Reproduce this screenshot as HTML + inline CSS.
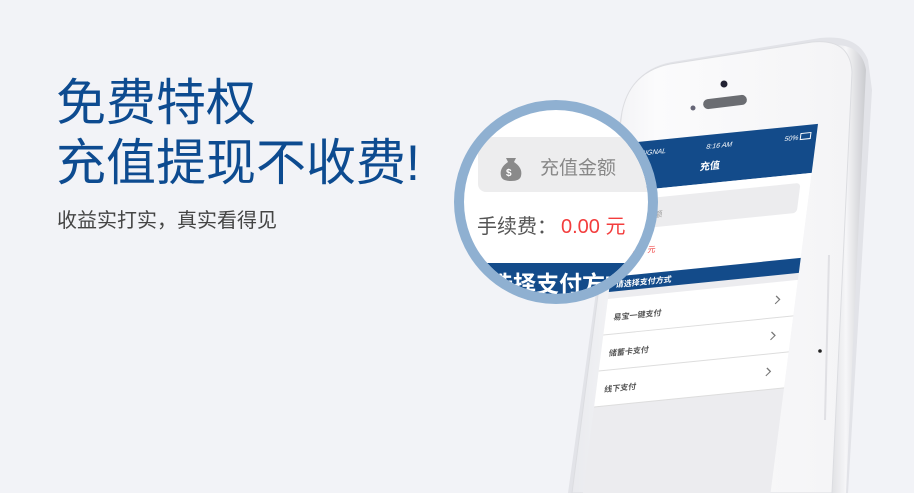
<!DOCTYPE html>
<html><head><meta charset="utf-8"><style>
html,body{margin:0;padding:0;width:914px;height:493px;overflow:hidden;background:#f2f3f7;font-family:"Liberation Sans","Noto Sans CJK SC",sans-serif}
.h{position:absolute;left:56px;color:#0d4b90;font-size:50px;line-height:58px;white-space:nowrap}
.s{position:absolute;left:57px;top:204px;color:#444;font-size:20px;white-space:nowrap}
svg{position:absolute;left:0;top:0}
</style></head><body>
<div class="h" style="top:74px">免费特权</div>
<div class="h" style="top:134px">充值提现不收费!</div>
<div class="s">收益实打实，真实看得见</div>
<svg width="914" height="493" viewBox="0 0 914 493" font-family="Liberation Sans, Noto Sans CJK SC, sans-serif">
<defs>
<linearGradient id="bd" x1="0" y1="0" x2="1" y2="0">
<stop offset="0" stop-color="#e9eaee"/><stop offset="0.3" stop-color="#fbfbfc"/><stop offset="1" stop-color="#f4f4f6"/></linearGradient>
<linearGradient id="sd" x1="0" y1="0" x2="1" y2="0">
<stop offset="0" stop-color="#d8d9dd"/><stop offset="0.5" stop-color="#f6f6f8"/><stop offset="1" stop-color="#c9cace"/></linearGradient>
<clipPath id="cc"><circle cx="556" cy="202" r="92"/></clipPath>
</defs>
<path d="M568,493 L620,120 Q628,70 672,62 L820,38 Q858,34 868,60 L872,90 L848,493 Z" fill="#e2e3e8"/>
<path d="M835,45 Q862,45 866,70 L846,493 L826,493 L848,70 Z" fill="url(#sd)"/>
<path d="M572,493 L622,112 Q630,72 670,64 L812,42 Q850,38 852,72 L832,493 Z" fill="url(#bd)" stroke="#dcdde1" stroke-width="1"/>
<circle cx="724" cy="84" r="3.5" fill="#223"/>
<rect x="703" y="97" width="44" height="10" rx="5" fill="#6b6d72" transform="rotate(-7 725 102)"/>
<circle cx="693" cy="108" r="2.5" fill="#667"/>
<circle cx="820" cy="351" r="1.8" fill="#222"/>
<path d="M829,255 L825,420" stroke="#e0e0e4" stroke-width="2"/>
<g transform="matrix(1,-0.1005,-0.1286,1,628,143)">
<rect x="0" y="0" width="190" height="370" fill="#ececef"/>
<rect x="0" y="0" width="190" height="49" fill="#134b8a"/>
<text x="14" y="14" fill="#fff" font-size="7" font-style="italic">SIGNAL</text>
<text x="80" y="14" fill="#fff" font-size="7" font-style="italic">8:16 AM</text>
<text x="158" y="14" fill="#fff" font-size="7" font-style="italic">50%</text>
<rect x="174" y="8" width="10" height="6" fill="none" stroke="#fff" stroke-width="1"/>
<text x="76" y="35" fill="#fff" font-size="10" font-weight="bold">充值</text>
<rect x="0" y="49" width="190" height="85" fill="#fff"/>
<rect x="4" y="58" width="176" height="30" rx="4" fill="#ececee"/>
<text x="12" y="78" fill="#999" font-size="8">充值金额</text>
<text x="0" y="113" fill="#555" font-size="8">费:</text>
<text x="16" y="113" fill="#f04040" font-size="8">0.00 元</text>
<rect x="0" y="134" width="190" height="15" fill="#134b8a"/>
<text x="6" y="145" fill="#fff" font-size="8" font-weight="bold">请选择支付方式</text>
<rect x="0" y="156" width="190" height="108" fill="#fff"/>
<line x1="0" y1="192" x2="190" y2="192" stroke="#ddd"/>
<line x1="0" y1="228" x2="190" y2="228" stroke="#ddd"/>
<line x1="0" y1="264" x2="190" y2="264" stroke="#ddd"/>
<text x="8" y="178" fill="#555" font-size="8" font-weight="bold">易宝一键支付</text>
<text x="8" y="214" fill="#555" font-size="8" font-weight="bold">储蓄卡支付</text>
<text x="8" y="250" fill="#555" font-size="8" font-weight="bold">线下支付</text>
<path d="M170,170 l4,4 l-4,4 M170,206 l4,4 l-4,4 M170,242 l4,4 l-4,4" stroke="#777" fill="none" stroke-width="1.2"/>
</g>
<g clip-path="url(#cc)">
<rect x="450" y="100" width="220" height="220" fill="#fff"/>
<rect x="478" y="137" width="180" height="55" rx="8" fill="#ededee"/>
<path d="M506,158 h10 l-2,4 q9,6 7,14 q-1,5 -10,5 q-9,0 -10,-5 q-2,-8 7,-14 z" fill="#8a8a8a"/>
<text x="506" y="176" fill="#fff" font-size="10" font-weight="bold">$</text>
<text x="540" y="174" fill="#888" font-size="19">充值金额</text>
<text x="477" y="233" fill="#555" font-size="20">手续费：</text>
<text x="561" y="233" fill="#f33d3d" font-size="20">0.00 元</text>
<rect x="450" y="263" width="230" height="60" fill="#134b8a"/>
<text x="490" y="292" fill="#fff" font-size="23" font-weight="bold">选择支付方式</text>
</g>
<circle cx="556" cy="202" r="97" fill="none" stroke="#8fb0d1" stroke-width="10"/>
</svg>
</body></html>
